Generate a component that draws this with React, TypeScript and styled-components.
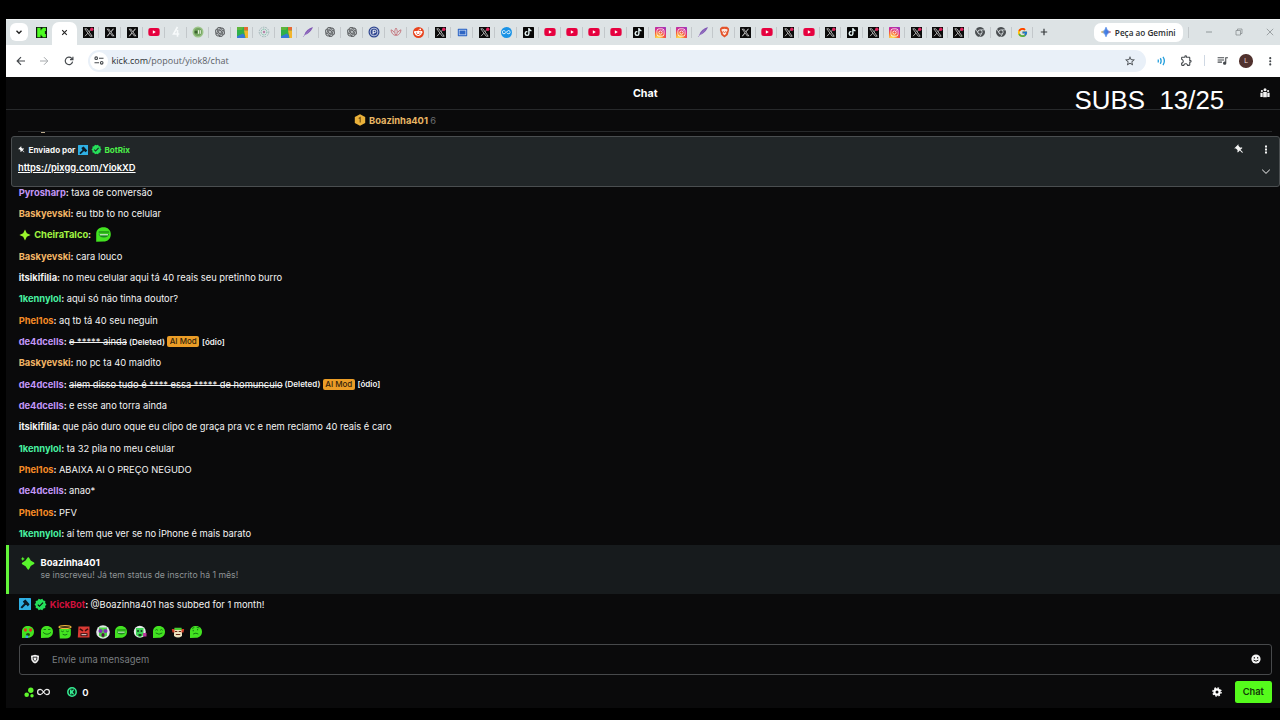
import React from "react";
import styled, { createGlobalStyle } from "styled-components";
import { FaXTwitter, FaTiktok, FaInstagram, FaYoutube, FaRedditAlien, FaChrome } from "react-icons/fa6";
import { SiOpenai } from "react-icons/si";
import { FcGoogle } from "react-icons/fc";
import { MdVerified, MdPushPin, MdQueueMusic, MdOutlineExtension, MdAllInclusive, MdStarBorder, MdMoreVert } from "react-icons/md";

const GlobalStyle = createGlobalStyle`
  * { box-sizing: border-box; }
  body { margin: 0; background: #000; overflow: hidden; }
  svg { display: block; flex: none; }
`;

const Screen = styled.div`
  position: relative;
  width: 1280px;
  height: 720px;
  padding: 18.6px 0 12.5px 5.5px;
  background: #000;
  font-family: Inter, sans-serif;
  overflow: hidden;
`;

const Window = styled.div`
  display: flex;
  flex-direction: column;
  height: 100%;
  background: #0a0a0b;
`;

/* ---------- browser chrome ---------- */

const TabStrip = styled.div`
  display: flex;
  align-items: stretch;
  flex: none;
  height: 26.6px;
  background: #dde3e5;
  border-top: 1px solid #eef2f3;
`;

const TabSearch = styled.div`
  display: flex;
  align-items: center;
  justify-content: center;
  width: 18px;
  height: 18px;
  margin: 3.4px 3.8px 0 4.2px;
  border-radius: 6px;
  background: #fff;
`;

const Tab = styled.div<{ $w: number; $sep?: boolean }>`
  display: flex;
  align-items: center;
  justify-content: center;
  flex: none;
  width: ${(p) => p.$w}px;
  height: 25px;
  background: ${(p) => (p.$sep ? "linear-gradient(#c3c8cb, #c3c8cb) right center / 1px 11px no-repeat" : "none")};
`;

const ActiveTab = styled(Tab)`
  height: 23.2px;
  margin-top: 2.6px;
  padding-bottom: 3px;
  border-radius: 7px 7px 0 0;
  background: #fff;
`;

const StripEnd = styled.div`
  display: flex;
  align-items: center;
  margin-left: auto;
`;

const GeminiPill = styled.div`
  display: flex;
  align-items: center;
  justify-content: center;
  gap: 4px;
  width: 88.5px;
  height: 18.5px;
  border-radius: 7px;
  background: #fff;
  color: #2b2d30;
  font: 600 8.2px "Open Sans", sans-serif;
  white-space: nowrap;
`;

const WindowButton = styled.div<{ $w: number }>`
  display: flex;
  justify-content: center;
  width: ${(p) => p.$w}px;
`;

const Toolbar = styled.div`
  display: flex;
  align-items: center;
  flex: none;
  height: 31.4px;
  padding-left: 4px;
  background: #fff;
  color: #45494d;
`;

const ToolSlot = styled.div<{ $w: number }>`
  display: flex;
  align-items: center;
  justify-content: center;
  flex: none;
  width: ${(p) => p.$w}px;
`;

const Omnibox = styled.div`
  display: flex;
  align-items: center;
  width: 1058px;
  height: 22.6px;
  margin-left: 7px;
  padding: 0 10px 0 2px;
  border-radius: 11.5px;
  background: #e9f0f8;
`;

const SiteInfo = styled.div`
  display: flex;
  align-items: center;
  justify-content: center;
  width: 18.6px;
  height: 18.6px;
  border-radius: 50%;
  background: #fff;
`;

const Url = styled.span`
  flex: 1;
  margin-left: 3.5px;
  color: #5b6166;
  font: 400 9px "Open Sans", sans-serif;
  b { color: #2d3134; font-weight: 400; }
`;

const Avatar = styled.div`
  width: 13.5px;
  height: 13.5px;
  border-radius: 50%;
  background: #50312d;
  color: #e8dcd8;
  text-align: center;
  font: 400 7.5px/13.5px "Open Sans", sans-serif;
`;

/* ---------- chat ---------- */

const ChatHeader = styled.div`
  position: relative;
  display: flex;
  align-items: center;
  justify-content: center;
  flex: none;
  height: 33px;
  padding: 1.4px 0 0 5px;
  border-bottom: 1px solid #27292b;
  color: #fff;
  font-size: 10.7px;
  font-weight: 700;
`;

const PeopleButton = styled.div`
  position: absolute;
  right: 10px;
  top: 11px;
`;

const Leaderboard = styled.div`
  display: flex;
  align-items: center;
  flex: none;
  gap: 3px;
  height: 22.4px;
  margin: 0 8px 0 12.5px;
  padding-left: 336px;
  border-bottom: 1px solid #27292b;
  color: #e9b765;
  font-size: 9.33px;
  font-weight: 700;
  span { color: #6d7072; font-weight: 400; margin-left: -0.7px; }
`;

const Peek = styled.div`
  flex: none;
  height: 4px;
  padding-left: 35px;
  &::before { content: ""; display: block; width: 4px; height: 1px; background: #b9a98b; }
`;

const Pinned = styled.div`
  display: flex;
  justify-content: space-between;
  flex: none;
  height: 51px;
  margin: 0 0.5px 0 5.2px;
  padding: 7px 6px 0 6.3px;
  border: 1px solid #4a4e50;
  border-radius: 3px;
  background: #212628;
  color: #f4f4f4;
`;

const PinnedBy = styled.div`
  display: flex;
  align-items: center;
  height: 12px;
  font-size: 8.1px;
  font-weight: 700;
  gap: 2.5px;
`;

const PinnedLink = styled.a`
  display: block;
  margin-top: 6px;
  font-size: 9.35px;
  line-height: 12px;
  font-weight: 600;
  color: #fff;
  text-decoration: underline;
`;

const PinnedActions = styled.div`
  display: grid;
  grid-template-columns: 14px 14px;
  grid-template-rows: 12px 12px;
  column-gap: 12.5px;
  row-gap: 9.5px;
  justify-items: center;
  align-items: center;
  svg:last-child { grid-column: 2; }
`;

const MessageList = styled.div<{ $grow?: boolean }>`
  display: flex;
  flex-direction: column;
  justify-content: flex-end;
  flex: ${(p) => (p.$grow ? "1" : "none")};
  min-height: 0;
  overflow: hidden;
  padding: ${(p) => (p.$grow ? "0 0 1px 13.2px" : "0 0 0 13.2px")};
`;

const Message = styled.div`
  display: flex;
  align-items: center;
  flex: none;
  height: 21.33px;
  color: #f4f4f4;
  font-size: 9.33px;
  white-space: pre;
`;

const Name = styled.b<{ $c: string }>`
  color: ${(p) => p.$c};
  font-weight: 700;
`;

const Colon = styled.b`
  font-weight: 600;
`;

const Small = styled.span`
  font-size: 8px;
  font-weight: 600;
`;

const ModTag = styled.span`
  height: 11px;
  margin: 0 2.7px 0 2.2px;
  padding: 0 2.6px;
  border-radius: 2px;
  background: #eb9d27;
  color: #33230a;
  font-size: 8px;
  line-height: 11.5px;
  font-weight: 500;
`;

const SubBanner = styled.div`
  display: flex;
  flex: none;
  height: 49px;
  margin-left: 0.5px;
  padding: 11px 0 0 10.5px;
  gap: 6px;
  border-left: 3px solid #63f53a;
  background: #171b1d;
`;

const SubText = styled.div`
  color: #8f9496;
  font-size: 8.68px;
  line-height: 13.6px;
  b { display: block; color: #fff; font-size: 9.4px; line-height: 13px; font-weight: 700; }
`;

const Badges = styled.span`
  display: flex;
  gap: 3px;
  margin-right: 3px;
`;

const EmoteRow = styled.div`
  display: flex;
  align-items: center;
  flex: none;
  height: 18px;
  margin: 7px 0 0 13px;
`;

const EmoteSlot = styled.div`
  display: flex;
  justify-content: center;
  width: 18.72px;
`;

const InputBox = styled.div`
  display: flex;
  align-items: center;
  flex: none;
  height: 31px;
  margin: 3.5px 8px 0 13px;
  padding: 0 10.5px 1px;
  border: 1.4px solid #47494b;
  border-radius: 3px;
  color: #797d80;
  font-size: 9.4px;
  span { flex: 1; margin-left: 12px; }
`;

const Footer = styled.div`
  display: flex;
  align-items: center;
  flex: none;
  height: 22px;
  margin: 6px 8px 4.5px 18.5px;
  color: #fff;
  font-size: 9.6px;
  font-weight: 600;
`;

const InfinityMark = styled.svg`
  margin: 0 16.5px 0 2.3px;
`;

const KicksMark = styled.svg`
  margin-right: 5.5px;
`;

const KicksCount = styled.span`
  flex: 1;
`;

const ChatButton = styled.div`
  width: 37.5px;
  height: 22px;
  margin-left: 12.2px;
  border-radius: 2.5px;
  background: #55fb1c;
  color: #123608;
  text-align: center;
  font-size: 9.3px;
  line-height: 22px;
  font-weight: 600;
`;

const StreamCounter = styled.div`
  position: absolute;
  left: 1074.5px;
  top: 85px;
  color: #fff;
  font: 400 25.9px/30px "Liberation Sans", Arial, sans-serif;
  white-space: pre;
`;

/* ---------- favicons ---------- */

const Tile = styled.div<{ $bg: string; $round?: boolean }>`
  display: flex;
  align-items: center;
  justify-content: center;
  width: 11px;
  height: 11px;
  border-radius: ${(p) => (p.$round ? "50%" : "0.5px")};
  background: ${(p) => p.$bg};
`;

const YtPlate = styled.div`
  display: flex;
  background: linear-gradient(#fff, #fff) center / 4px 5px no-repeat;
`;

const TiltedPin = styled(MdPushPin)`
  transform: rotate(-45deg);
`;

type Kind = "x" | "xr" | "yt" | "four" | "green" | "gpt" | "map" | "spiral" | "feather" | "p" | "lotus" | "reddit" | "screen" | "loop" | "tt" | "ig" | "brave" | "chrome" | "google";

function Favicon({ kind }: { kind: Kind }) {
  switch (kind) {
    case "x":
      return <Tile $bg="#0b0b0b"><FaXTwitter size={9} color="#c4c4c4" /></Tile>;
    case "xr":
      return (
        <svg width="11" height="11" viewBox="0 0 11 11">
          <rect width="11" height="11" fill="#0b0b0b" />
          <path d="M1.800 1.800h2l5.400 7.400h-2zM8.600 1.800 6 4.800M4.800 6.200 2 9.200" fill="none" stroke="#cfcfcf" strokeWidth=".8" />
          <circle cx="8.800" cy="2.200" r="1.700" fill="#e0245e" />
        </svg>
      );
    case "yt":
      return <YtPlate><FaYoutube size={12} color="#e6013f" /></YtPlate>;
    case "four":
      return <svg width="11" height="12" viewBox="0 0 11 12"><path d="M6.500 1 2.500 8h5.800M6.500 4v6.800" fill="none" stroke="#f7fafb" strokeWidth="1.600" /></svg>;
    case "green":
      return (
        <svg width="12" height="12" viewBox="0 0 12 12">
          <circle cx="6" cy="6" r="5.500" fill="#9cc48a" /><circle cx="6" cy="6" r="4" fill="#74a561" />
          <circle cx="4" cy="6" r="1.500" fill="#3c6230" /><path d="M6.500 4.200v3.600M8.300 4.200v3.600" stroke="#e8f3df" />
        </svg>
      );
    case "gpt":
      return <SiOpenai size={10} color="#55585a" stroke="#55585a" strokeWidth={0.8} />;
    case "map":
      return (
        <svg width="11" height="11" viewBox="0 0 11 11">
          <rect width="11" height="11" fill="#2fb04a" /><path d="M7 0h4v3.500H7z" fill="#e56a33" /><path d="M0 0h6.500L5 3H0z" fill="#5fb53c" />
          <path d="M7 3.500h4V11H8.500z" fill="#f3b52c" /><path d="M0 9.200 6 6.500 8 9v2H0z" fill="#3579d8" />
        </svg>
      );
    case "spiral":
      return (
        <svg width="12" height="12" viewBox="0 0 12 12" fill="none">
          <circle cx="6" cy="6" r="4.800" stroke="#9db3b6" strokeDasharray="1.600 1" />
          <circle cx="6" cy="6" r="2.900" stroke="#6bb69b" strokeDasharray="1.200 .8" />
          <circle cx="6" cy="6" r="1.200" fill="#b784a8" />
        </svg>
      );
    case "feather":
      return (
        <svg width="12" height="12" viewBox="0 0 12 12">
          <path d="M11 1C6.500 2.200 3.300 5 2.200 9.200 5.500 8.300 9 5.800 11 1z" fill="#8057b4" /><path d="M1 11 8 3.500" stroke="#a58acb" strokeWidth=".7" />
        </svg>
      );
    case "p":
      return (
        <svg width="12" height="12" viewBox="0 0 12 12" fill="none">
          <circle cx="6" cy="6" r="5.500" fill="#2e4690" /><circle cx="6" cy="6" r="3.900" stroke="#dfe5f3" strokeWidth=".8" />
          <path d="M5.100 8.300V4.300h1.500a1.200 1.200 0 0 1 0 2.400H5.100" stroke="#fff" strokeWidth="1" />
        </svg>
      );
    case "lotus":
      return (
        <svg width="12" height="12" viewBox="0 0 12 12" fill="none" stroke="#c4737b" strokeWidth=".9">
          <path d="M6 9.500C4.200 7 4.400 4.200 6 2c1.600 2.200 1.800 5 0 7.500zM5.600 9.500C2.900 9 1.300 6.900 1 3.800c1.500.5 2.600 1.400 3.300 2.700M6.400 9.500C9.100 9 10.700 6.900 11 3.800c-1.500.5-2.600 1.400-3.300 2.700" />
        </svg>
      );
    case "reddit":
      return <Tile $bg="#e8431d" $round><FaRedditAlien size={8.5} color="#fff" /></Tile>;
    case "screen":
      return (
        <svg width="11" height="11" viewBox="0 0 11 11">
          <rect x=".8" y="1.800" width="9.400" height="7.400" rx=".6" fill="#2f66c4" /><rect x="2.200" y="3.200" width="6.600" height="4.600" fill="none" stroke="#c8daf6" strokeWidth=".7" />
        </svg>
      );
    case "loop":
      return <Tile $bg="#1a93e6" $round><MdAllInclusive size={8.5} color="#fff" /></Tile>;
    case "tt":
      return <Tile $bg="#070707"><FaTiktok size={8} color="#eafafa" /></Tile>;
    case "ig":
      return (
        <Tile $bg="radial-gradient(circle at 28% 105%, #fdd14b 0 14%, #f8662e 42%, #d92d8a 66%, #8f38c9 100%)">
          <FaInstagram size={9} color="#fff" />
        </Tile>
      );
    case "brave":
      return (
        <svg width="11" height="12" viewBox="0 0 11 12">
          <path d="M3 .7h5l1.800 1.500.3 1.800L8.700 9 5.500 11.500 2.300 9 .9 4l.3-1.800z" fill="#e4532b" />
          <path d="M2.700 3.300 4.500 3l1-.3 1 .3 1.800.3.200 1.200-1.400 2 .2 1.300-1.800 1.400-1.800-1.400.2-1.300-1.400-2z" fill="#fbe9e2" /><path d="M4 5l1.500 2L7 5" stroke="#e4532b" strokeWidth=".7" fill="none" />
        </svg>
      );
    case "chrome":
      return <FaChrome size={10} color="#4b4f52" />;
    case "google":
      return <FcGoogle size={11} />;
  }
}

const WIDE: Kind[] = ["xr", "x", "x", "yt", "four", "green", "gpt", "map", "spiral", "map", "feather", "gpt", "gpt", "p", "lotus", "reddit", "xr", "screen", "xr", "loop", "tt", "yt", "yt", "yt", "yt", "tt"];
const NARROW: Kind[] = ["ig", "ig", "feather", "brave", "x", "yt", "xr", "yt", "xr", "tt", "xr", "ig", "xr", "xr", "xr", "chrome", "chrome", "google"];

/* ---------- chat glyphs ---------- */

const ModBadge = ({ size }: { size: number }) => (
  <svg width={size} height={size} viewBox="0 0 12 12">
    <rect width="12" height="12" rx=".6" fill="#2fb0e4" />
    <path d="M3.800 3.400 6.400 1.600 10.600 6.200 8.800 8.400 7.500 7.100 6.500 7 3 10.600 1.500 9.200 5.200 5.600z" fill="#0b1d29" />
  </svg>
);

const Verified = ({ size }: { size: number }) => <MdVerified size={size} color="#25e05a" />;

const KickFavicon = () => (
  <svg width="11" height="11" viewBox="0 0 11 11">
    <rect width="11" height="11" fill="#101810" />
    <path d="M1.200.8h3.400v2.500h.8V2.100h1V.8h3.500v3.300H8.900v1.400 1.400h1v3.300H6.400V8.900h-1V7.700h-.8v2.500H1.200z" fill="#4dfb22" />
  </svg>
);

type EmoteKind = "love" | "smile" | "halo" | "rage" | "hype" | "grin" | "headset" | "happy" | "mask" | "think";
const EMOTES: EmoteKind[] = ["love", "smile", "halo", "rage", "hype", "grin", "headset", "happy", "mask", "think"];

const Blob = "M1 6.500C1 3 3.500 1 7 1s6 2.200 6 5.800S10.500 12.800 7 12.800L1 13z";

function Emote({ kind, size = 14 }: { kind: EmoteKind; size?: number }) {
  const ink = { fill: "none", stroke: "#0f6a12", strokeWidth: 0.9, strokeLinecap: "round" as const };
  return (
    <svg width={size} height={size} viewBox="0 0 14 14">
      {kind === "love" && (<>
        <path d={Blob} fill="#43e321" /><path d="M3 3.500h2.800v2.200L4.400 7 3 5.700zM8.200 3.500H11v2.200L9.600 7 8.200 5.700z" fill="#dd3b23" />
        <ellipse cx="7" cy="9.400" rx="2" ry="1.500" fill="#234c12" /><path d="M4.500 10.500h2.700V13H4.500z" fill="#38a8e0" />
      </>)}
      {kind === "smile" && (<><path d={Blob} fill="#43e321" /><path d="M4 4.500h1.500M8.500 4.500H10M3.300 7.600q3.700 3.600 7.400 0" {...ink} /></>)}
      {kind === "halo" && (<>
        <path d="M1.200 4h11.600v5.500c0 2.500-2 4-5 4H1.800z" fill="#43e321" /><ellipse cx="7" cy="2" rx="6" ry="1.400" fill="none" stroke="#f0b53d" strokeWidth="1.200" />
        <path d="M3.500 6.300q1 1 2 0M8.500 6.300q1 1 2 0M5 9.500q2 1.400 4 0" {...ink} />
      </>)}
      {kind === "rage" && (<>
        <path d="M1.500 1.500h11v11H.8z" fill="#d93a34" /><path d="M2.800 3.800 6 5.800M11 3.800 8 5.800" stroke="#3b0b0b" strokeWidth="1.500" />
        <path d="M3.500 8.200h7v3h-7z" fill="#351011" /><path d="M4.500 9.700h5" stroke="#f3dada" />
      </>)}
      {kind === "hype" && (<>
        <circle cx="7" cy="7" r="6.800" fill="#dfe6e4" /><path d="M3 2.500h8v8.200l-4 2-4-2z" fill="#49d443" /><circle cx="4.500" cy="6" r="2" fill="#812fb5" /><circle cx="9.500" cy="6" r="2" fill="#812fb5" />
        <ellipse cx="7" cy="10" rx="1.600" ry="2" fill="#551444" />
      </>)}
      {kind === "grin" && (<>
        <path d={Blob} fill="#43e321" /><path d="M3 6.400H11.600q-.3 3-4.300 3T3 6.400z" fill="#1d8423" />
        <path d="M3.900 7.200h6.800" stroke="#cff5c8" strokeWidth="1" /><path d="M3.400 5h8" {...ink} />
      </>)}
      {kind === "headset" && (<>
        <circle cx="6.800" cy="6.800" r="6" fill="#e4ebe8" /><path d="M3 3h7.500v7L7 12.500 3 10z" fill="#3dd455" /><circle cx="5" cy="6" r="1" fill="#10391a" /><circle cx="8.500" cy="6" r="1" fill="#10391a" />
        <path d="M10 8h3.500v3.500H10z" fill="#b9369b" /><path d="M5.500 9h3v2h-3z" fill="#173f1b" />
      </>)}
      {kind === "happy" && (<><path d={Blob} fill="#43e321" /><path d="M3.600 5q1-1.300 2 0M8.400 5q1-1.300 2 0M4 8.200q3 2.300 6 0" {...ink} /></>)}
      {kind === "mask" && (<>
        <path d="M3 4.500h8V11q-4 3-8 0z" fill="#ece2bf" /><path d="M3.500 2.800h7L11 5H3z" fill="#4bcf32" /><path d="M.8 4h2.700v3.500H1.500zM10.500 4h2.700l-.7 3.500h-2z" fill="#cf4029" />
        <path d="M4 6.500h2.300M7.700 6.500H10M4.800 9.500h4.400" stroke="#642818" strokeWidth="1.200" />
      </>)}
      {kind === "think" && (<><path d={Blob} fill="#43e321" /><path d="M4.200 5.300v.6M8.600 4.300v.6M3.500 3.300 5 2.600M8 2.300l2 .5M4.500 8.800q2.500-1.500 4.500 0" {...ink} /></>)}
    </svg>
  );
}

/* ---------- data ---------- */

const SAND = "#f2b566", VIOLET = "#c396f7", MINT = "#48f0a0", ORANGE = "#f58a26", WHITE = "#f3f3f3", LIME = "#a2f542";

type Line = { name: string; color: string; text?: string; struck?: string; sub?: boolean };
const LINES: Line[] = [
  { name: "Pyrosharp", color: VIOLET, text: "taxa de conversão" },
  { name: "Baskyevski", color: SAND, text: "eu tbb to no celular" },
  { name: "CheiraTalco", color: LIME, sub: true },
  { name: "Baskyevski", color: SAND, text: "cara louco" },
  { name: "itsikifilia", color: WHITE, text: "no meu celular aqui tá 40 reais seu pretinho burro" },
  { name: "1kennylol", color: MINT, text: "aqui só não tinha doutor?" },
  { name: "Phel1os", color: ORANGE, text: "aq tb tá 40 seu neguin" },
  { name: "de4dcells", color: VIOLET, struck: "e ***** ainda" },
  { name: "Baskyevski", color: SAND, text: "no pc ta 40 maldito" },
  { name: "de4dcells", color: VIOLET, struck: "alem disso tudo é **** essa ***** de homunculo" },
  { name: "de4dcells", color: VIOLET, text: "e esse ano torra ainda" },
  { name: "itsikifilia", color: WHITE, text: "que pão duro oque eu clipo de graça pra vc e nem reclamo 40 reais é caro" },
  { name: "1kennylol", color: MINT, text: "ta 32 pila no meu celular" },
  { name: "Phel1os", color: ORANGE, text: "ABAIXA AI O PREÇO NEGUDO" },
  { name: "de4dcells", color: VIOLET, text: "anao*" },
  { name: "Phel1os", color: ORANGE, text: "PFV" },
  { name: "1kennylol", color: MINT, text: "aí tem que ver se no iPhone é mais barato" },
];

const SubStar = styled.span`
  margin-right: 3.5px;
`;

const InlineEmote = styled.span`
  margin-left: 1.8px;
`;

function ChatLine({ line }: { line: Line }) {
  return (
    <Message>
      {line.sub && (
        <SubStar>
          <svg width="12" height="12" viewBox="0 0 12 12"><path d="M6 .4 7.800 4.200 11.600 6 7.800 7.800 6 11.600 4.200 7.800.4 6l3.800-1.800z" fill="#9af52c" /></svg>
        </SubStar>
      )}
      <Name $c={line.color}>{line.name}</Name>
      <Colon>: </Colon>
      {line.text}
      {line.sub && <InlineEmote><Emote kind="grin" size={17} /></InlineEmote>}
      {line.struck && (
        <>
          <s>{line.struck}</s>
          <Small> (Deleted)</Small>
          <ModTag>AI Mod</ModTag>
          <Small>[ódio]</Small>
        </>
      )}
    </Message>
  );
}

const stroke = (w: number, c = "currentColor") => ({ fill: "none", stroke: c, strokeWidth: w });

export default function App() {
  return (
    <Screen>
      <GlobalStyle />
      <Window>
        <TabStrip>
          <TabSearch><svg width="8" height="8" viewBox="0 0 8 8"><path d="M1.500 2.700 4 5.200l2.500-2.500" {...stroke(1.4, "#222")} /></svg></TabSearch>
          <Tab $w={20.5}><KickFavicon /></Tab>
          <ActiveTab $w={25.5}><svg width="7" height="7" viewBox="0 0 7 7"><path d="m1.200 1.200 4.600 4.600m0-4.600L1.200 5.800" {...stroke(1.1, "#222")} /></svg></ActiveTab>
          {WIDE.map((k, i) => <Tab key={i} $w={22} $sep><Favicon kind={k} /></Tab>)}
          {NARROW.map((k, i) => <Tab key={i} $w={21.33} $sep><Favicon kind={k} /></Tab>)}
          <Tab $w={22}><svg width="8" height="8" viewBox="0 0 8 8"><path d="M4 .8v6.400M.8 4h6.400" {...stroke(1.2, "#34383a")} /></svg></Tab>
          <StripEnd>
            <GeminiPill>
              <svg width="10" height="10" viewBox="0 0 10 10">
                <defs><linearGradient id="gem" x1="0" y1="0.5" x2="1" y2="0.5"><stop offset="0" stopColor="#e8b33c" /><stop offset=".35" stopColor="#4b87e8" /><stop offset=".7" stopColor="#3d73dd" /><stop offset="1" stopColor="#d8575a" /></linearGradient></defs>
                <path d="M5 .2Q5.600 4.400 9.800 5 5.600 5.600 5 9.800 4.400 5.600.2 5 4.400 4.400 5 .2z" fill="url(#gem)" stroke="url(#gem)" strokeWidth=".7" />
              </svg>
              Peça ao Gemini
            </GeminiPill>
            <Tab $w={6} $sep />
            <WindowButton $w={40.5}><svg width="8" height="8" viewBox="0 0 8 8"><path d="M1 4h6" {...stroke(0.8, "#7f8588")} /></svg></WindowButton>
            <WindowButton $w={20.5}><svg width="8" height="8" viewBox="0 0 8 8"><path d="M1 2.500h4.500V7H1zM2.500 2.500V1H7v4.500H5.500" {...stroke(0.7, "#7f8588")} /></svg></WindowButton>
            <WindowButton $w={40.5}><svg width="8" height="8" viewBox="0 0 8 8"><path d="m.8.8 6.400 6.400m0-6.400L.8 7.200" {...stroke(0.7, "#7f8588")} /></svg></WindowButton>
            <RightBleed />
          </StripEnd>
        </TabStrip>

        <Toolbar>
          <ToolSlot $w={22.5}><svg width="10" height="10" viewBox="0 0 10 10"><path d="M9 5H1.500M5 1.200 1.200 5 5 8.800" {...stroke(1.2)} /></svg></ToolSlot>
          <ToolSlot $w={24.5}><svg width="10" height="10" viewBox="0 0 10 10"><path d="M1 5h7.500M5 1.200 8.800 5 5 8.800" {...stroke(1, "#a5a9ac")} /></svg></ToolSlot>
          <ToolSlot $w={24}><svg width="10" height="10" viewBox="0 0 10 10"><path d="M8.600 5.600A3.700 3.700 0 1 1 7.700 2.400L8.800 3.500M8.900.8v2.900H6" {...stroke(1.2)} /></svg></ToolSlot>
          <Omnibox>
            <SiteInfo><svg width="10" height="9" viewBox="0 0 10 9"><circle cx="2.200" cy="2.200" r="1.300" {...stroke(1.1)} /><circle cx="7.700" cy="6.800" r="1.300" {...stroke(1.1)} /><path d="M5 2.200h4.500M.5 6.800H5" {...stroke(1.1)} /></svg></SiteInfo>
            <Url><b>kick.com</b>/popout/yiok8/chat</Url>
            <MdStarBorder size={12} />
          </Omnibox>
          <ToolSlot $w={33}>
            <svg width="10" height="10" viewBox="0 0 10 10"><path d="M1 3.500q.8 1.500 0 3M3.300 2.200q1.700 2.800 0 5.600M6 .9q2.700 4.100 0 8.200" {...stroke(1.3, "#249fdd")} /></svg>
          </ToolSlot>
          <ToolSlot $w={16}><MdOutlineExtension size={13} /></ToolSlot>
          <ToolSlot $w={19}><svg width="1" height="11"><rect width="1" height="11" fill="#cfd8e3" /></svg></ToolSlot>
          <ToolSlot $w={17}><MdQueueMusic size={13} /></ToolSlot>
          <ToolSlot $w={31}><Avatar>L</Avatar></ToolSlot>
          <ToolSlot $w={17}><MdMoreVert size={12.5} /></ToolSlot>
        </Toolbar>

        <ChatHeader>
          Chat
          <PeopleButton>
            <svg width="10" height="10" viewBox="0 0 10 10" fill="#f2f2f2"><circle cx="5" cy="1.700" r="1.500" /><circle cx="1.900" cy="3" r="1.100" /><circle cx="8.100" cy="3" r="1.100" /><path d="M3.200 4h3.600v5.200H3.200zM.4 4.700h2.300v4.200H.4zM7.300 4.700h2.300v4.200H7.300z" /></svg>
          </PeopleButton>
        </ChatHeader>
        <Leaderboard>
          <svg width="12" height="12" viewBox="0 0 12 12"><path d="M6 .2 11.200 3v6L6 11.800.8 9V3z" fill="#eab13a" /><path d="M4.700 4.500 6.200 3.500v5" {...stroke(1.1, "#6d4a0f")} /></svg>
          Boazinha401<span>6</span>
        </Leaderboard>
        <Peek />
        <Pinned>
          <div>
            <PinnedBy>
              <TiltedPin size={8} />
              Enviado por
              <ModBadge size={10.5} />
              <Verified size={11} />
              <Name $c="#4cf04a">BotRix</Name>
            </PinnedBy>
            <PinnedLink>https://pixgg.com/YiokXD</PinnedLink>
          </div>
          <PinnedActions>
            <TiltedPin size={11} />
            <svg width="4" height="9" viewBox="0 0 4 9" fill="#f4f4f4"><path d="M1 .4h2v2H1zM1 3.500h2v2H1zM1 6.600h2v2H1z" /></svg>
            <svg width="10" height="9" viewBox="0 0 10 9"><path d="M1.200 2.700 5 6.400 8.800 2.700" {...stroke(1)} /></svg>
          </PinnedActions>
        </Pinned>

        <MessageList $grow>{LINES.map((l, i) => <ChatLine key={i} line={l} />)}</MessageList>

        <SubBanner>
          <svg width="15" height="15" viewBox="0 0 15 15" fill="#58f52c"><path d="M8.300 2 10.200 5.200 13.600 7.300 10.200 9.400 8.300 12.800 6 9.600 2.600 7.500 6 5.200z" stroke="#58f52c" strokeWidth="1.600" strokeLinejoin="round" /><path d="M2.800.8l.7 1.400 1.400.7-1.400.7-.7 1.400-.7-1.400-1.400-.7 1.400-.7z" /></svg>
          <SubText><b>Boazinha401</b>se inscreveu! Já tem status de inscrito há 1 mês!</SubText>
        </SubBanner>
        <MessageList>
          <Message>
            <Badges><ModBadge size={12} /><Verified size={13} /></Badges>
            <Name $c="#d0103c">KickBot</Name><Colon>: </Colon>@Boazinha401 has subbed for 1 month!
          </Message>
        </MessageList>

        <EmoteRow>{EMOTES.map((k) => <EmoteSlot key={k}><Emote kind={k} /></EmoteSlot>)}</EmoteRow>
        <InputBox>
          <svg width="10" height="10" viewBox="0 0 10 10"><path d="M5 .7 9 1.700 8.700 6 7 8.600 5 9.600 3 8.600 1.300 6 1 1.700z" fill="#f2f2f2" /><path d="M3 3.200h4L6.600 6 5 7.300 3.400 6z" {...stroke(0.9, "#222")} /></svg>
          <span>Envie uma mensagem</span>
          <svg width="10" height="10" viewBox="0 0 10 10"><circle cx="5" cy="5" r="4.600" fill="#f5f5f5" /><path d="M3.300 3v1.600M6.700 3v1.600M2.600 6.200q2.400 2 4.800 0" {...stroke(1, "#111")} /></svg>
        </InputBox>
        <Footer>
          <svg width="11" height="11" viewBox="0 0 11 11" fill="#5ef52c"><circle cx="6.800" cy="3.300" r="2.700" /><circle cx="2.700" cy="7.800" r="2.300" /><circle cx="8" cy="8.700" r="1.700" /></svg>
          <InfinityMark width="13" height="8" viewBox="0 0 13 8"><path d="M6.500 4C5.500 2.500 4.700 1.300 3.300 1.300a2.700 2.700 0 0 0 0 5.400C4.700 6.700 5.500 5.500 6.500 4s1.800-2.700 3.200-2.700a2.700 2.700 0 0 1 0 5.400C8.300 6.700 7.500 5.500 6.500 4z" {...stroke(1.2, "#eee")} /></InfinityMark>
          <KicksMark width="10" height="10" viewBox="0 0 10 10"><circle cx="5" cy="5" r="4.200" fill="#0a2417" stroke="#35ec92" strokeWidth="1.500" /><path d="M3 2.500h1.500v1.400L6 2.500h1.500L5.700 5l1.800 2.500H6L4.500 6.100v1.400H3z" fill="#35ec92" /></KicksMark>
          <KicksCount>0</KicksCount>
          <svg width="10" height="10" viewBox="0 0 10 10"><circle cx="5" cy="5" r="2.600" {...stroke(2.2, "#fff")} /><circle cx="5" cy="5" r="4.100" {...stroke(1.4, "#fff")} strokeDasharray="1.610 1.610" /></svg>
          <ChatButton>Chat</ChatButton>
        </Footer>
      </Window>
      <StreamCounter>{"SUBS  13/25"}</StreamCounter>
    </Screen>
  );
}

/* The window runs slightly past the right edge, so the controls sit flush with it. */
const RightBleed = styled.div`
  margin-right: -10px;
`;
